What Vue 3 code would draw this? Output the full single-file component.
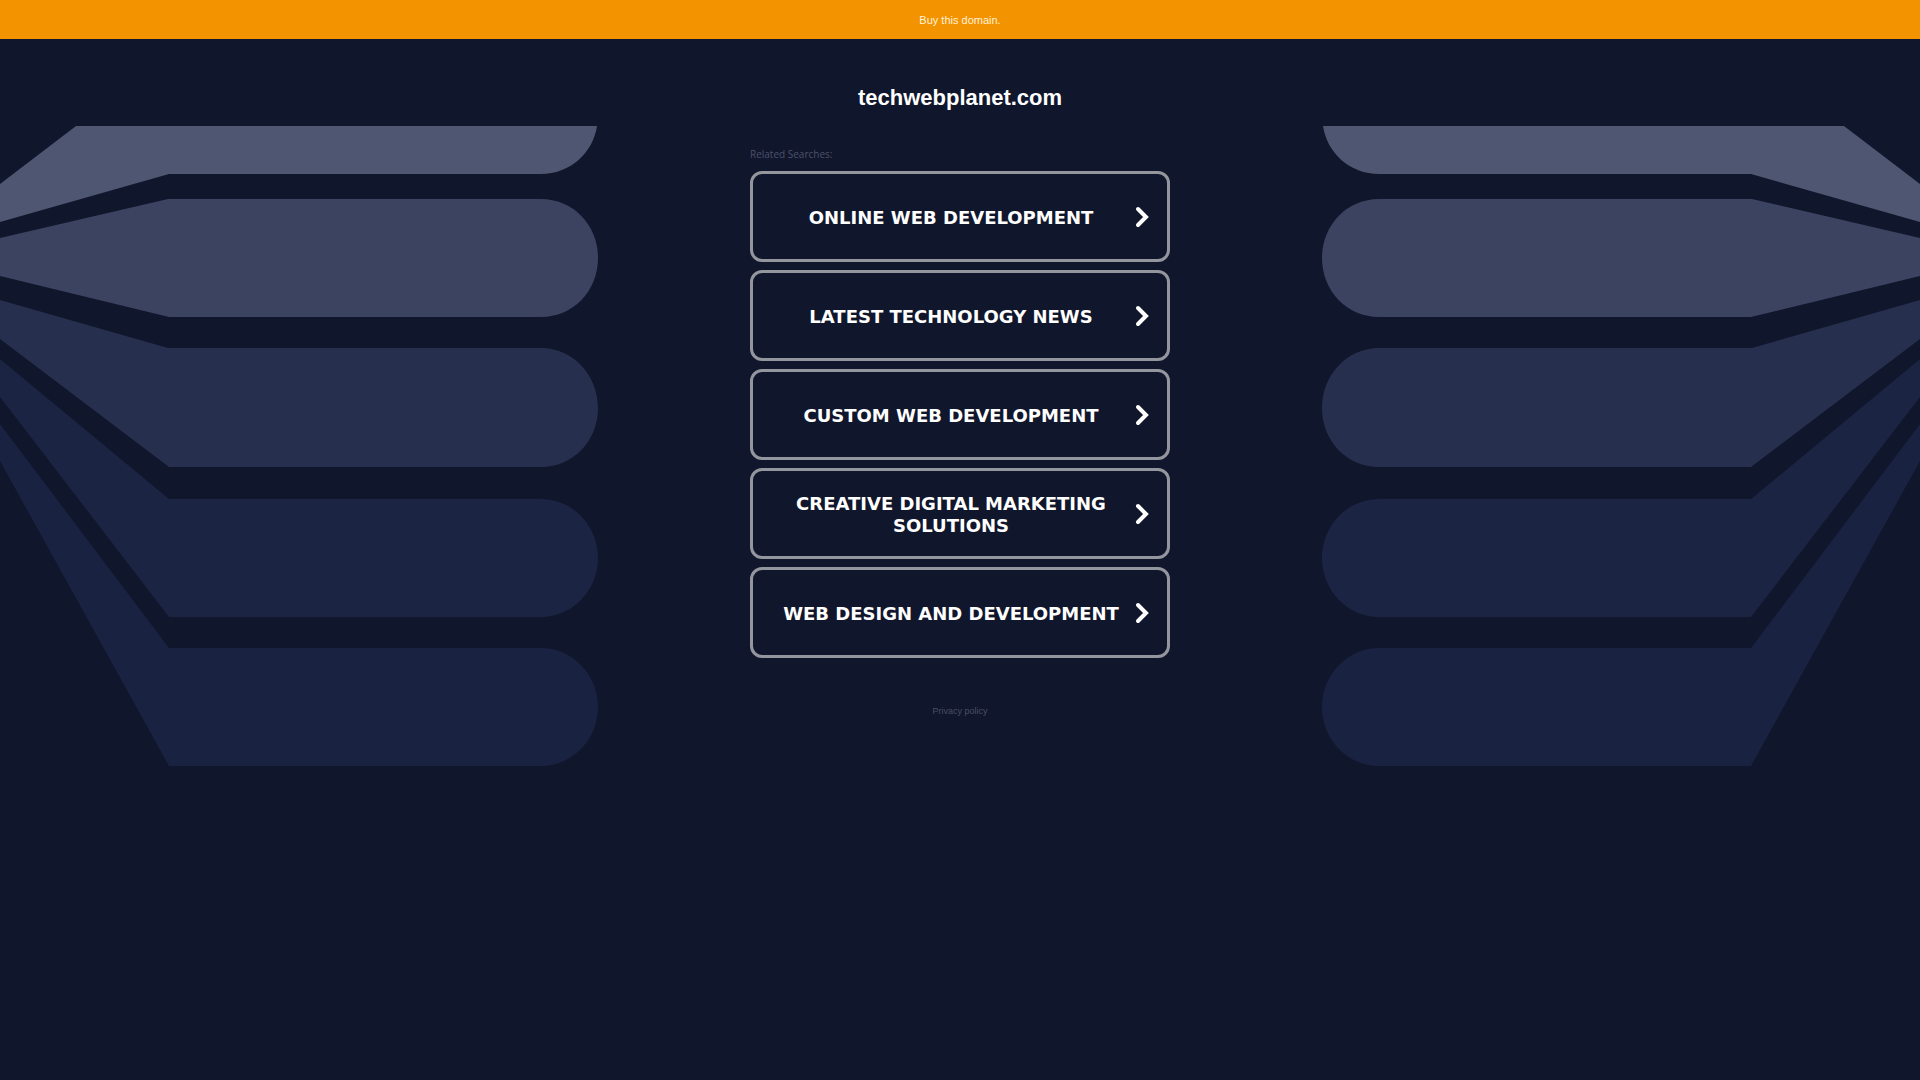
<script setup>
const searches = [
  'Online Web Development',
  'Latest Technology News',
  'Custom Web Development',
  'Creative Digital Marketing Solutions',
  'Web Design and Development',
]

const ribbons = [
  { fill: '#4e5672', d: 'M76 0H597C593 27 570 48 541 48H169L0 96V58Z' },
  { fill: '#3c4361', d: 'M0 112L168 73H541C573 73 598 99 598 132C598 165 573 191 541 191H169L0 150Z' },
  { fill: '#272f4e', d: 'M0 174L168 222H541C573 222 598 249 598 282C598 315 573 341 541 341H169L0 213Z' },
  { fill: '#1c2443', d: 'M0 233L169 373H541C573 373 598 400 598 432C598 464 573 491 541 491H169L0 271Z' },
  { fill: '#1a2241', d: 'M0 298L169 522H541C573 522 598 549 598 581C598 613 573 640 541 640H169L0 335Z' },
]
</script>

<template>
  <div class="page">
    <a class="banner" href="#">Buy this domain.</a>
    <header class="header">
      <h1 class="domain">techwebplanet.com</h1>
    </header>
    <main class="stage">
      <svg class="art" viewBox="0 0 1920 640" aria-hidden="true">
        <g>
          <path v-for="ribbon in ribbons" :key="ribbon.fill" :d="ribbon.d" :fill="ribbon.fill" />
        </g>
        <g transform="translate(1920 0) scale(-1 1)">
          <path v-for="ribbon in ribbons" :key="ribbon.fill" :d="ribbon.d" :fill="ribbon.fill" />
        </g>
      </svg>
      <div class="content">
        <p class="label">Related Searches:</p>
        <nav class="list">
          <a v-for="item in searches" :key="item" class="card" href="#">
            <span class="card-text">{{ item }}</span>
            <svg class="chevron" viewBox="0 0 14 22" aria-hidden="true">
              <path d="M3 3L11 11L3 19" />
            </svg>
          </a>
        </nav>
        <footer class="footer"><a class="privacy" href="#">Privacy policy</a></footer>
      </div>
    </main>
  </div>
</template>

<style>
body {
  margin: 0;
  background: #10162b;
}
</style>

<style scoped>
.page {
  min-height: 100vh;
  background: #10162b;
  color: #fff;
  font-family: "Liberation Sans", Arial, sans-serif;
}

.banner {
  display: block;
  padding: 13px 0 11px;
  background: #f49300;
  color: #fff2dc;
  font-size: 11px;
  line-height: 15px;
  text-align: center;
  text-decoration: none;
}

.header {
  padding: 41px 0 10px;
  text-align: center;
}

.domain {
  margin: 0;
  font-size: 22px;
  line-height: 36px;
}

.stage {
  display: grid;
}

.art,
.content {
  grid-area: 1 / 1;
}

.art {
  display: block;
  width: 100%;
}

.content {
  z-index: 1;
  justify-self: center;
  box-sizing: border-box;
  width: 100%;
  max-width: 420px;
  padding-top: 20px;
}

.label {
  margin: 0 0 9px;
  color: #4d526b;
  font-family: "Open Sans", sans-serif;
  font-size: 10px;
  line-height: 16px;
}

.list {
  display: flex;
  flex-direction: column;
  gap: 8px;
}

.card {
  display: flex;
  align-items: center;
  box-sizing: border-box;
  min-height: 91px;
  padding: 0 18px 0 14px;
  border: 3px solid #94969d;
  border-radius: 12px;
  background: #10162b;
  color: #fff;
  font-family: Verdana, "DejaVu Sans", sans-serif;
  font-size: 18px;
  font-weight: 700;
  line-height: 22px;
  text-align: center;
  text-decoration: none;
  text-transform: uppercase;
}

.card-text {
  flex: 1;
  padding-top: 2px;
}

.chevron {
  flex: none;
  width: 14px;
  height: 22px;
  fill: none;
  stroke: #fff;
  stroke-width: 4;
  stroke-linecap: round;
}

.footer {
  padding: 42px 0;
  text-align: center;
}

.privacy {
  color: #4a4f67;
  font-size: 9px;
  line-height: 16px;
  text-decoration: none;
}
</style>
